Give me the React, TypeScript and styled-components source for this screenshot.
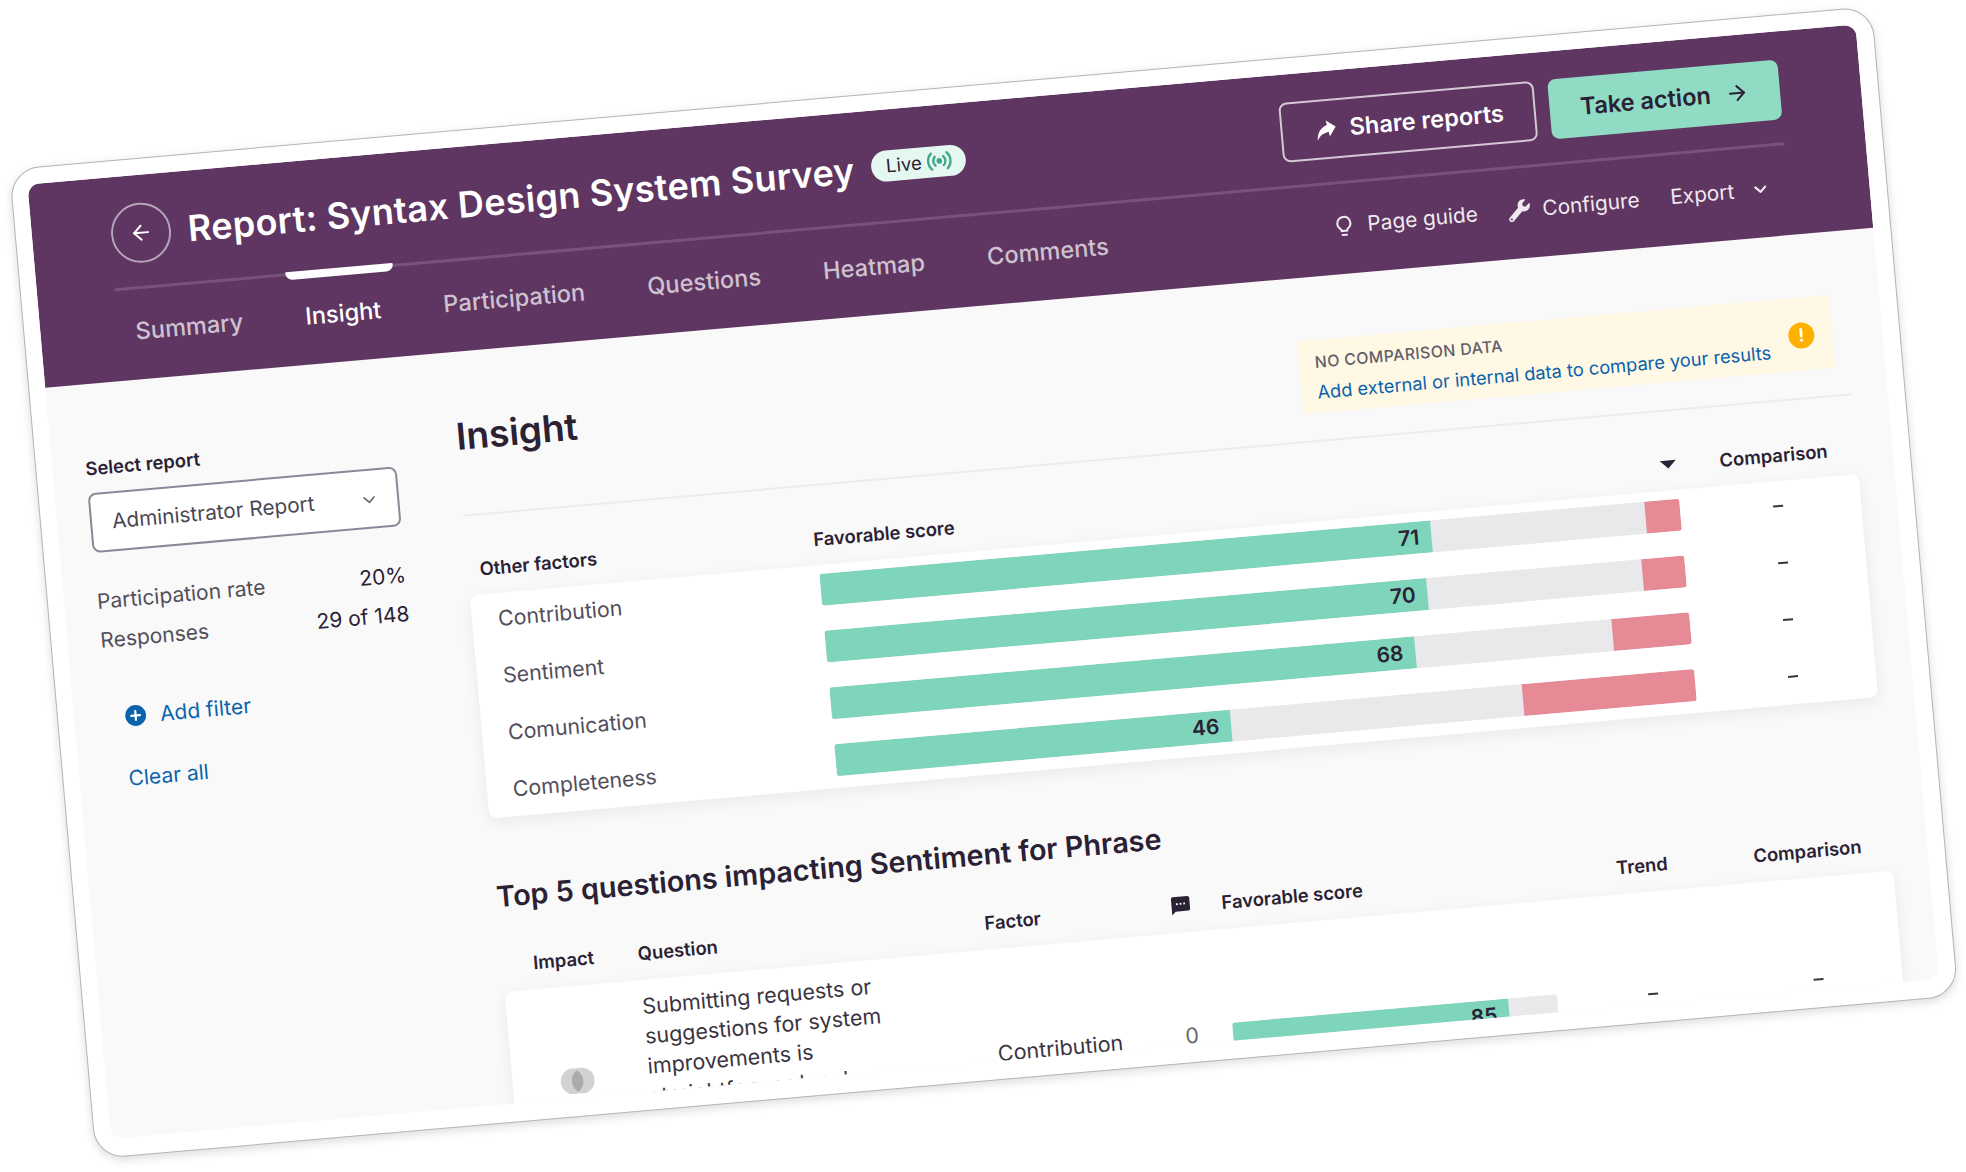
import React from 'react';
import styled, { createGlobalStyle } from 'styled-components';
import { ArrowLeft, ArrowRight, ChevronDown, Plus } from 'lucide-react';
import { FaWrench } from 'react-icons/fa';
import { MdSms } from 'react-icons/md';

const Global = createGlobalStyle`
  html, body { margin: 0; padding: 0; background: #fff; }
  body { font-family: Inter, "Noto Sans", sans-serif; color: #2a2134; }
  * { box-sizing: border-box; }
`;

const Page = styled.div`
  width: 1966px;
  height: 1172px;
  overflow: hidden;
  padding: 168.5px 0 0 9.1px;
`;

const Frame = styled.div`
  width: 1869.5px;
  height: 993.5px;
  padding: 15.5px 17px 17px 15.5px;
  background: #fff;
  border: 1.5px solid #b4b4b4;
  border-radius: 30px;
  box-shadow: 0 3px 10px rgba(0, 0, 0, 0.14);
  transform: rotate(-5deg);
  transform-origin: 0 0;
`;

const Screen = styled.div`
  height: 958px;
  border-radius: 12px;
  overflow: hidden;
  background: #f9f9f9;
`;

const Header = styled.header`
  height: 204px;
  padding: 28px 80.5px 0 78.5px;
  background: #5f3561;
  color: #fff;
`;

const TopRow = styled.div`
  display: flex;
  align-items: center;
  height: 60px;
`;

const BackButton = styled.button`
  display: flex;
  align-items: center;
  justify-content: center;
  width: 60px;
  height: 60px;
  margin: 0 17px 0 1px;
  padding: 0;
  border: 2px solid #b7a5b9;
  border-radius: 50%;
  background: none;
  color: #fff;
`;

const Title = styled.h1`
  margin: 0 17px 0 0;
  font-size: 36px;
  line-height: 44px;
  font-weight: 600;
  letter-spacing: 0.3px;
  white-space: nowrap;
`;

const LiveBadge = styled.span`
  display: flex;
  align-items: center;
  justify-content: center;
  gap: 5px;
  width: 95px;
  height: 31px;
  margin-top: -3px;
  border-radius: 16px;
  background: #e5f7f1;
  color: #2a2134;
  font-size: 18.5px;
  svg { color: #3ba98a; }
`;

const Actions = styled.div`
  display: flex;
  gap: 14px;
  margin-left: auto;
`;

const ActionButton = styled.button<{ $primary?: boolean }>`
  display: flex;
  align-items: center;
  justify-content: center;
  gap: ${p => (p.$primary ? 14 : 10)}px;
  width: ${p => (p.$primary ? '231.5px' : '256px')};
  height: 60px;
  border: ${p => (p.$primary ? 'none' : '2px solid #d4c8d5')};
  border-radius: 8px;
  background: ${p => (p.$primary ? '#90dbc4' : 'none')};
  color: ${p => (p.$primary ? '#2a2134' : '#fff')};
  font-family: inherit;
  font-size: 23.6px;
  font-weight: 600;
`;

const ShareGlyph = styled.svg`
  transform: rotate(-10deg);
  fill: currentColor;
`;

const Rule = styled.div`
  height: 3px;
  margin-top: 23px;
  background: #76537a;
`;

const NavRow = styled.nav`
  display: flex;
  justify-content: space-between;
  padding: 27px 18.5px 0 1px;
`;

const Tabs = styled.div`
  display: flex;
  gap: 30.5px;
`;

const Tab = styled.a<{ $active?: boolean }>`
  position: relative;
  padding: 0 16px;
  font-size: 23.6px;
  line-height: 30px;
  font-weight: 500;
  color: ${p => (p.$active ? '#fff' : '#cfc2d0')};

  ${p => p.$active && `
    &::before {
      content: '';
      position: absolute;
      left: 0;
      right: 0;
      top: -31px;
      height: 8px;
      border-radius: 1px 1px 7px 7px;
      background: #fff;
    }
  `}
`;

const Tools = styled.div`
  display: flex;
  align-items: center;
  gap: 31px;
  height: 30px;
`;

const Tool = styled.a<{ $gap?: number }>`
  display: flex;
  align-items: center;
  gap: ${p => p.$gap ?? 12}px;
  font-size: 20.8px;
  font-weight: 400;
  color: #f0eaf0;
`;

const BulbGlyph = styled.svg`
  fill: none;
  stroke: currentColor;
  stroke-width: 2;
  stroke-linecap: round;
`;

const Body = styled.div`
  display: grid;
  grid-template-columns: 310px 1394px;
  column-gap: 62px;
  padding-left: 33.5px;
`;

const Sidebar = styled.aside`
  padding-top: 72px;
`;

const FieldLabel = styled.div`
  font-size: 18.4px;
  line-height: 24px;
  font-weight: 600;
`;

const SelectBox = styled.div`
  display: flex;
  align-items: center;
  justify-content: space-between;
  height: 60px;
  margin: 13px 0 37px;
  padding: 0 18px 0 20px;
  border: 2.5px solid #8a8898;
  border-radius: 8px;
  background: #fff;
  font-size: 20.8px;
  color: #4a4652;
  svg { color: #6b6875; margin-top: 3px; }
`;

const Stat = styled.div`
  display: flex;
  justify-content: space-between;
  font-size: 21px;
  line-height: 24px;
  margin-bottom: 15px;
  color: #524e5a;
  strong { font-weight: 400; color: #2a2134; }
`;

const AddFilter = styled.a`
  display: flex;
  align-items: center;
  gap: 14px;
  height: 28px;
  margin: 52px 0 34px 18px;
  font-size: 21px;
  color: #0b63ab;
`;

const PlusDot = styled.span`
  display: flex;
  align-items: center;
  justify-content: center;
  width: 21px;
  height: 21px;
  border-radius: 50%;
  background: #0b63ab;
  color: #fff;
`;

const ClearAll = styled.a`
  display: block;
  margin-left: 16px;
  font-size: 21px;
  line-height: 28px;
  color: #0b63ab;
`;

const Main = styled.main`
  padding-top: 63px;
`;

const PageHead = styled.div`
  display: flex;
  justify-content: space-between;
  align-items: flex-start;
  padding: 0 14px 27px 0;
  border-bottom: 2px solid #ececee;
`;

const PageTitle = styled.h2`
  margin: 0;
  font-size: 37px;
  line-height: 44px;
  font-weight: 600;
`;

const Notice = styled.div`
  position: relative;
  width: 534px;
  height: 73px;
  padding: 13px 16px;
  background: #fef8e5;
`;

const NoticeHead = styled.div`
  font-size: 15.9px;
  line-height: 20px;
  font-weight: 500;
  letter-spacing: 0.4px;
  color: #625e68;
`;

const NoticeLink = styled.a`
  display: block;
  margin-top: 6px;
  font-size: 18.3px;
  line-height: 26px;
  color: #0b63ab;
  white-space: nowrap;
`;

const NoticeIcon = styled.span`
  position: absolute;
  right: 18px;
  top: 25px;
  width: 26px;
  height: 26px;
  border-radius: 50%;
  background: #ffb000;
  color: #fff;
  font-size: 18px;
  line-height: 26px;
  font-weight: 700;
  text-align: center;
`;

const FactorHead = styled.div`
  display: flex;
  align-items: center;
  height: 26px;
  margin: 40px 0 13px;
  padding: 0 29px 0 12px;
  font-size: 18.4px;
  font-weight: 600;
`;

const HeadCell = styled.span<{ $width?: number; $grow?: boolean }>`
  ${p => p.$width && `width: ${p.$width}px;`}
  ${p => p.$grow && 'flex: 1;'}
`;

const Caret = styled.span`
  width: 0;
  height: 0;
  margin-right: 44px;
  border-left: 8px solid transparent;
  border-right: 8px solid transparent;
  border-top: 8px solid #2a2134;
`;

const Card = styled.section`
  border-radius: 8px;
  background: #fff;
  box-shadow: 0 4px 14px rgba(40, 30, 50, 0.07);
`;

const FactorCard = styled(Card)`
  display: grid;
  row-gap: 25px;
  padding: 9px 0 12px;
`;

const FactorRow = styled.div`
  display: grid;
  grid-template-columns: 350px 863px 1fr;
  align-items: center;
  height: 32px;
`;

const FactorName = styled.span`
  padding-left: 26px;
  font-size: 21.3px;
  color: #524e5a;
`;

const Bar = styled.div`
  display: flex;
  height: 32px;
  border-radius: 3px;
  overflow: hidden;
  background: #e9e9eb;
`;

const BarScore = styled.div`
  display: flex;
  align-items: center;
  justify-content: flex-end;
  padding-right: 12px;
  background: #7fd5bb;
  font-size: 21px;
  font-weight: 600;
`;

const BarRisk = styled.div`
  margin-left: auto;
  background: #e68b96;
`;

const Dash = styled.span<{ $shift?: number }>`
  justify-self: center;
  width: 10px;
  height: 2px;
  margin-left: ${p => p.$shift ?? 0}px;
  background: #3a3440;
`;

const SectionTitle = styled.h3`
  margin: 60px 0 36px;
  font-size: 28.8px;
  line-height: 38px;
  font-weight: 600;
`;

const QuestionGrid = styled.div`
  display: grid;
  grid-template-columns: 136px 348px 177px 61px 326px 192px 140px 14px;
`;

const QuestionHead = styled(QuestionGrid)`
  align-items: center;
  height: 26px;
  margin-bottom: 14px;
  font-size: 18.4px;
  font-weight: 600;
`;

const Impact = styled.span`
  padding-left: 31px;
`;

const Centered = styled.span`
  text-align: center;
`;

const CommentHead = styled.span`
  display: flex;
  justify-content: center;
  padding-right: 21px;
`;

const QuestionRow = styled(QuestionGrid)`
  align-items: center;
  height: 204px;
  font-size: 21.5px;
`;

const ImpactIcon = styled.svg`
  justify-self: center;
  margin: 0 6px 14px 0;
`;

const QuestionText = styled.p`
  width: 250px;
  margin: -2px 0 0;
  font-size: 21.5px;
  line-height: 30px;
  color: #3a3440;
`;

const FactorCell = styled.span`
  padding: 4px 0 0 2px;
  color: #3a3440;
`;

const CommentCount = styled.span`
  padding: 2px 21px 0 0;
  text-align: center;
  color: #6a6672;
`;

const SmallBar = styled(Bar)`
  margin-top: 16px;
`;

const factors = [
  { name: 'Contribution', score: 71, risk: 4 },
  { name: 'Sentiment', score: 70, risk: 5 },
  { name: 'Comunication', score: 68, risk: 9 },
  { name: 'Completeness', score: 46, risk: 20 },
];

const tabs = ['Summary', 'Insight', 'Participation', 'Questions', 'Heatmap', 'Comments'];

export default function App() {
  return (
    <Page>
      <Global />
      <Frame>
        <Screen>
          <Header>
            <TopRow>
              <BackButton><ArrowLeft size={24} strokeWidth={2} /></BackButton>
              <Title>Report: Syntax Design System Survey</Title>
              <LiveBadge>
                Live
                <svg width="25" height="20" viewBox="0 0 24 20" fill="none" stroke="currentColor" strokeWidth="2.3" strokeLinecap="round">
                  <circle cx="12" cy="10" r="2.8" fill="currentColor" stroke="none" />
                  <path d="M7.8 5.5a6.4 6.4 0 0 0 0 9M16.2 5.5a6.4 6.4 0 0 1 0 9M4.2 2a11 11 0 0 0 0 16M19.8 2a11 11 0 0 1 0 16" />
                </svg>
              </LiveBadge>
              <Actions>
                <ActionButton>
                  <ShareGlyph width="28" height="28" viewBox="0 0 24 24">
                    <path d="M14 9V5l7 7-7 7v-4.1c-5 0-8.5 1.6-11 5.1 1-5 4-10 11-11z" />
                  </ShareGlyph>
                  Share reports
                </ActionButton>
                <ActionButton $primary>Take action <ArrowRight size={24} strokeWidth={2} /></ActionButton>
              </Actions>
            </TopRow>
            <Rule />
            <NavRow>
              <Tabs>
                {tabs.map(tab => (
                  <Tab key={tab} $active={tab === 'Insight'}>{tab}</Tab>
                ))}
              </Tabs>
              <Tools>
                <Tool>
                  <BulbGlyph width="24" height="24" viewBox="0 0 24 24">
                    <path d="M12 3a6.5 6.5 0 0 0-4 11.6c.9.7 1.2 1.4 1.3 2.4h5.4c.1-1 .4-1.7 1.3-2.4A6.5 6.5 0 0 0 12 3z" />
                    <path d="M9.8 21h4.4" />
                  </BulbGlyph>
                  Page guide
                </Tool>
                <Tool><FaWrench size={22} /> Configure</Tool>
                <Tool $gap={16}>Export <ChevronDown size={20} strokeWidth={2.5} /></Tool>
              </Tools>
            </NavRow>
          </Header>
          <Body>
            <Sidebar>
              <FieldLabel>Select report</FieldLabel>
              <SelectBox>Administrator Report <ChevronDown size={20} /></SelectBox>
              <Stat>Participation rate <strong>20%</strong></Stat>
              <Stat>Responses <strong>29 of 148</strong></Stat>
              <AddFilter><PlusDot><Plus size={15} strokeWidth={3.5} /></PlusDot> Add filter</AddFilter>
              <ClearAll>Clear all</ClearAll>
            </Sidebar>
            <Main>
              <PageHead>
                <PageTitle>Insight</PageTitle>
                <Notice>
                  <NoticeHead>NO COMPARISON DATA</NoticeHead>
                  <NoticeLink>Add external or internal data to compare your results</NoticeLink>
                  <NoticeIcon>!</NoticeIcon>
                </Notice>
              </PageHead>
              <FactorHead>
                <HeadCell $width={335}>Other factors</HeadCell>
                <HeadCell $grow>Favorable score</HeadCell>
                <Caret />
                <span>Comparison</span>
              </FactorHead>
              <FactorCard>
                {factors.map(f => (
                  <FactorRow key={f.name}>
                    <FactorName>{f.name}</FactorName>
                    <Bar>
                      <BarScore style={{ width: `${f.score}%` }}>{f.score}</BarScore>
                      <BarRisk style={{ width: `${f.risk}%` }} />
                    </Bar>
                    <Dash $shift={14} />
                  </FactorRow>
                ))}
              </FactorCard>
              <SectionTitle>Top 5 questions impacting Sentiment for Phrase</SectionTitle>
              <QuestionHead>
                <Impact>Impact</Impact>
                <span>Question</span>
                <span>Factor</span>
                <CommentHead><MdSms size={22} /></CommentHead>
                <span>Favorable score</span>
                <Centered>Trend</Centered>
                <Centered>Comparison</Centered>
              </QuestionHead>
              <Card>
                <QuestionRow>
                  <ImpactIcon width="34" height="26" viewBox="0 0 34 26">
                    <circle cx="13" cy="13" r="13" fill="#d2d2d2" />
                    <circle cx="21" cy="13" r="13" fill="#d2d2d2" />
                    <path d="M17 2.2a13 13 0 0 1 0 21.6a13 13 0 0 1 0-21.6z" fill="#ababab" />
                  </ImpactIcon>
                  <QuestionText>
                    Submitting requests or suggestions for system improvements is straightforward and easy for me and
                    my team to use every day
                  </QuestionText>
                  <FactorCell>Contribution</FactorCell>
                  <CommentCount>0</CommentCount>
                  <SmallBar>
                    <BarScore style={{ width: '85%' }}>85</BarScore>
                  </SmallBar>
                  <Dash />
                  <Dash />
                </QuestionRow>
              </Card>
            </Main>
          </Body>
        </Screen>
      </Frame>
    </Page>
  );
}
